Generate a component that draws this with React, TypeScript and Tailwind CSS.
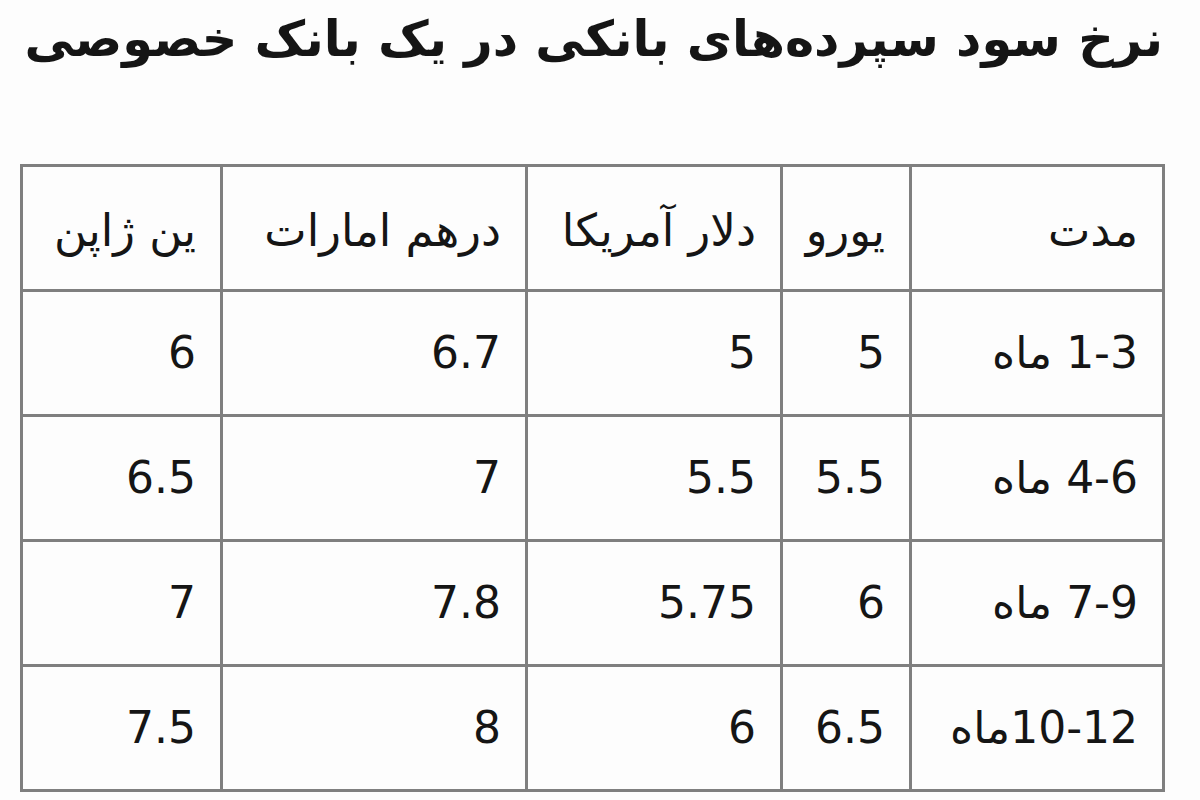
import React from "react";

const headers = ["مدت", "یورو", "دلار آمریکا", "درهم امارات", "ین ژاپن"];
const rows = [
  ["1-3 ماه", "5", "5", "6.7", "6"],
  ["4-6 ماه", "5.5", "5.5", "7", "6.5"],
  ["7-9 ماه", "6", "5.75", "7.8", "7"],
  ["10-12ماه", "6.5", "6", "8", "7.5"],
];
const widths = ["w-[253px]", "w-[129px]", "w-[255px]", "w-[305px]", "w-[200px]"];

export default function App() {
  return (
    <div
      dir="rtl"
      className="w-[1200px] h-[800px] bg-[#fdfdfd] text-[#151515] overflow-hidden"
      style={{ fontFamily: '"DejaVu Sans", Tahoma, sans-serif' }}
    >
      <h1 className="pt-[9px] pr-[37px] text-[49.4px] leading-[60px] font-bold whitespace-nowrap">
        نرخ سود سپرده‌های بانکی در یک بانک خصوصی
      </h1>
      <div className="pt-[95px] pr-[35px]">
        <table className="border-collapse table-fixed w-[1144px]">
          <colgroup>
            {widths.map((w, i) => (
              <col key={i} className={w} />
            ))}
          </colgroup>
          <thead>
            <tr>
              {headers.map((h, i) => (
                <th
                  key={i}
                  className="h-[125px] border-[3px] border-[#7f7f7f] text-right font-normal text-[45px] pr-[24px] pt-[6px] align-middle whitespace-nowrap"
                >
                  {h}
                </th>
              ))}
            </tr>
          </thead>
          <tbody>
            {rows.map((r, ri) => (
              <tr key={ri}>
                {r.map((c, ci) => (
                  <td
                    key={ci}
                    className="h-[125px] border-[3px] border-[#7f7f7f] text-right text-[44px] pr-[24px] align-middle whitespace-nowrap"
                  >
                    {c}
                  </td>
                ))}
              </tr>
            ))}
          </tbody>
        </table>
      </div>
    </div>
  );
}
